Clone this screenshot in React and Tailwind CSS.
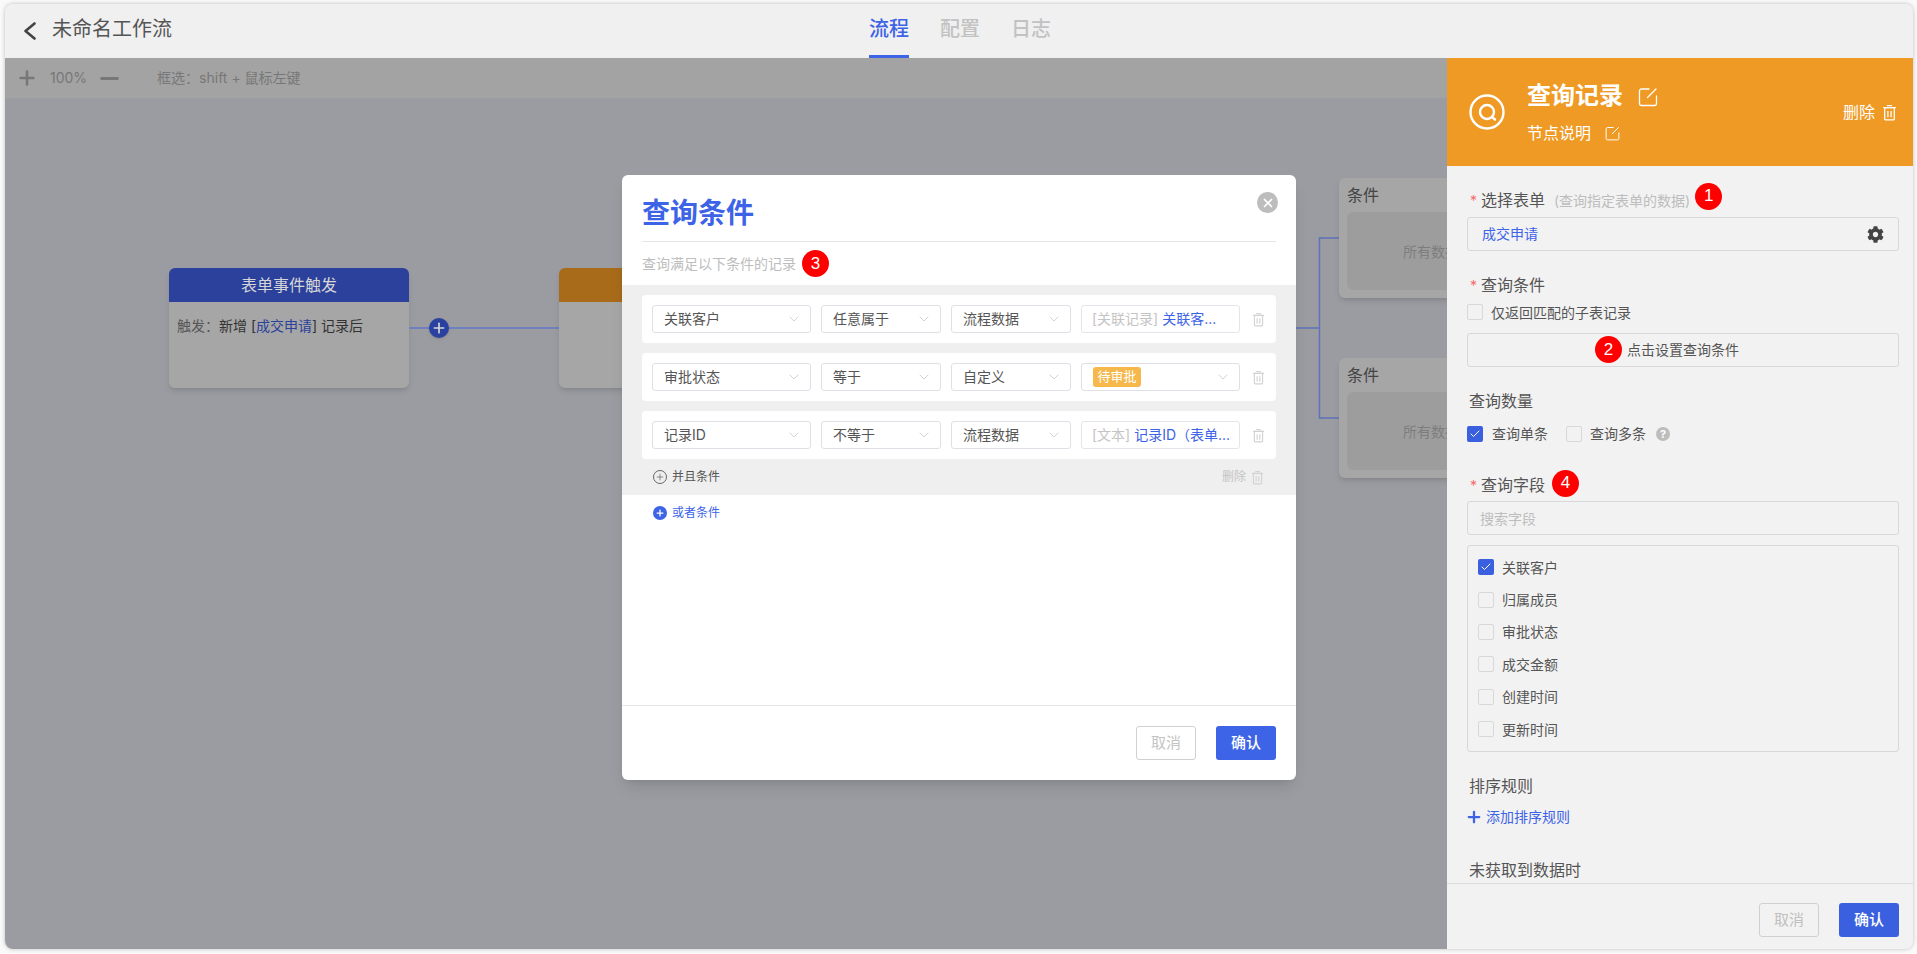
import React from 'react';
import { ChevronDown, Plus, Minus, Check, X } from 'lucide-react';
import { FaCog } from 'react-icons/fa';

const fieldOptions = ['关联客户', '归属成员', '审批状态', '成交金额', '创建时间', '更新时间'];

const conditionRows = [
  { field: '关联客户', op: '任意属于', source: '流程数据', value: <><span className="text-[#c4c4c4]">[关联记录] </span><span className="text-[#3d63e6]">关联客...</span></> },
  { field: '审批状态', op: '等于', source: '自定义', tag: '待审批' },
  { field: '记录ID', op: '不等于', source: '流程数据', value: <><span className="text-[#c4c4c4]">[文本] </span><span className="text-[#3d63e6]">记录ID（表单...</span></> },
];

function EditIcon({ className }) {
  return (
    <svg viewBox="0 0 20 20" fill="none" stroke="currentColor" strokeWidth="1.3" strokeLinecap="round" className={className}>
      <path d="M11 2H3.5A2 2 0 0 0 1.500 4v12.500a2 2 0 0 0 2 2h13a2 2 0 0 0 2-2V9" />
      <path d="M18 2 9.500 10.500" />
    </svg>
  );
}

function TrashIcon({ className }) {
  return (
    <svg viewBox="0 0 12 16" fill="none" stroke="currentColor" strokeWidth="1.2" className={className}>
      <path d="M4 1.500h4M0.500 3.500h11" strokeLinecap="round" />
      <rect x="1.500" y="3.500" width="9" height="11.500" rx="1" />
      <path d="M4.500 6.500v6M7.500 6.500v6" />
    </svg>
  );
}

function Badge({ n, className = '' }) {
  return (
    <span className={`flex h-[27px] w-[27px] shrink-0 items-center justify-center rounded-full bg-[#fe0000] font-['Liberation_Sans',sans-serif] text-[17px] text-white ${className}`}>
      {n}
    </span>
  );
}

function CheckBox({ checked }) {
  return checked ? (
    <span className="flex h-4 w-4 shrink-0 items-center justify-center rounded-[2px] bg-[#3b60df]">
      <Check className="h-3 w-3 text-white" strokeWidth={2} />
    </span>
  ) : (
    <span className="h-4 w-4 shrink-0 rounded-[2px] border border-[#d8d8d8]" />
  );
}

function Select({ className, children }) {
  return (
    <div className={`flex h-7 shrink-0 items-center justify-between rounded-[3px] border border-[#dfdfe6] pl-[11px] pr-2 text-[14px] text-[#555] ${className}`}>
      <span className="truncate pb-0.5">{children}</span>
      <ChevronDown className="h-4 w-4 shrink-0 text-[#bdbdbd]" strokeWidth={1} />
    </div>
  );
}

function FieldLabel({ required, children }) {
  return (
    <div className="flex h-6 items-center text-[16px] text-[#555]">
      {required && <span className="w-[14px] pl-[3px] text-[14px] text-[#f56c6c]">*</span>}
      {children}
    </div>
  );
}

function ConditionNode({ className }) {
  return (
    <div className={`absolute left-[1334px] h-[120px] w-[240px] rounded-md bg-[#a6a6a6] px-2 shadow-md ${className}`}>
      <div className="flex h-[34px] items-center text-[16px] text-[#444]">条件</div>
      <div className="flex h-[78px] items-center justify-center rounded-md bg-[#9d9d9d] text-[14px] text-[#7d7d7d]">所有数据都可进入</div>
    </div>
  );
}

function Canvas() {
  return (
    <div className="relative flex-1 overflow-hidden bg-[#9b9ca1]">
      <div className="absolute left-[164px] top-[170px] h-[120px] w-[240px] overflow-hidden rounded-md bg-[#a6a6a6] shadow-md">
        <div className="flex h-[34px] items-center justify-center bg-[#2b419b] text-[16px] text-[#d6d6d6]">表单事件触发</div>
        <div className="px-2 pt-[14px] text-[14px] leading-5 text-[#333]">
          <span className="text-[#555]">触发：</span>新增 [<span className="text-[#2c419b]">成交申请</span>] 记录后
        </div>
      </div>
      <div className="absolute left-[404px] top-[229px] h-0.5 w-[150px] bg-[#6f7fbf]" />
      <div className="absolute left-[424px] top-[220px] flex h-5 w-5 items-center justify-center rounded-full bg-[#2b41a0] shadow">
        <Plus className="h-4 w-4 text-[#d6d6d6]" strokeWidth={2.5} />
      </div>
      <div className="absolute left-[554px] top-[170px] h-[120px] w-[240px] overflow-hidden rounded-md bg-[#a6a6a6] shadow-md">
        <div className="h-[34px] bg-[#a86b1a]" />
      </div>
      <svg className="absolute left-[1280px] top-[130px] h-[200px] w-[60px]" fill="none" stroke="#5d72b8" strokeWidth="1.500">
        <path d="M0 100H34.500M54 10H34.500V190H54" />
      </svg>
      <ConditionNode className="top-[80px]" />
      <ConditionNode className="top-[260px]" />
    </div>
  );
}

function ConditionCard({ row }) {
  return (
    <div className="flex h-12 items-center gap-[10px] rounded bg-white pl-[10px]">
      <Select className="w-[159px]">{row.field}</Select>
      <Select className="w-[120px]">{row.op}</Select>
      <Select className="w-[120px]">{row.source}</Select>
      {row.tag ? (
        <Select className="w-[159px]">
          <span className="mt-0.5 flex h-5 w-12 items-center justify-center rounded-[3px] bg-[#f6b84a] text-[13px] text-white">{row.tag}</span>
        </Select>
      ) : (
        <div className="flex h-7 w-[159px] items-center rounded-[3px] border border-[#e4e4ea] pl-[10px] text-[14px]">
          <span className="truncate pb-0.5">{row.value}</span>
        </div>
      )}
      <TrashIcon className="ml-[3px] h-[15px] w-[11px] text-[#d2d2d2]" />
    </div>
  );
}

function QueryModal() {
  return (
    <div className="absolute left-[617px] top-[171px] flex h-[605px] w-[674px] flex-col overflow-hidden rounded-md bg-white shadow-lg">
      <div className="relative mx-5 flex h-[67px] items-end border-b border-[#e6e6e6] pb-[8px]">
        <span className="text-[28px] font-bold leading-[40px] text-[#3d63e6]">查询条件</span>
        <span className="absolute right-[-2px] top-[17px] flex h-[21px] w-[21px] items-center justify-center rounded-full bg-[#bdbdbd]">
          <X className="h-[14px] w-[14px] text-white" strokeWidth={3} />
        </span>
      </div>
      <div className="mx-5 flex h-[43px] items-center gap-[6px] text-[14px] text-[#bdbdbd]">
        查询满足以下条件的记录
        <Badge n={3} />
      </div>
      <div className="flex h-[210px] flex-col bg-[#efefef] px-5 pt-[10px]">
        <div className="flex flex-col gap-[10px]">
          {conditionRows.map(row => <ConditionCard key={row.field} row={row} />)}
        </div>
        <div className="flex flex-1 items-center justify-between pl-[11px] pr-[13px] text-[12px]">
          <span className="flex items-center gap-[5px] text-[#555]">
            <span className="flex h-[14px] w-[14px] items-center justify-center rounded-full border border-[#666]">
              <Plus className="h-[10px] w-[10px]" strokeWidth={1.5} />
            </span>
            并且条件
          </span>
          <span className="flex items-center gap-[6px] text-[#c4c4c4]">
            删除
            <TrashIcon className="h-[15px] w-[11px] text-[#d2d2d2]" />
          </span>
        </div>
      </div>
      <div className="flex flex-1 items-start px-5 pl-[31px] pt-[10px]">
        <span className="flex items-center gap-[5px] text-[12px] leading-[16px] text-[#3d63e6]">
          <span className="flex h-[14px] w-[14px] items-center justify-center rounded-full bg-[#3d63e6]">
            <Plus className="h-[10px] w-[10px] text-white" strokeWidth={3} />
          </span>
          或者条件
        </span>
      </div>
      <div className="flex h-[75px] items-start justify-end gap-5 border-t border-[#e6e6e6] px-5 pt-[20px]">
        <button className="h-[34px] w-[60px] rounded-[3px] border border-[#d0d0d0] text-[15px] text-[#c4c4c4]">取消</button>
        <button className="h-[34px] w-[60px] rounded-[3px] bg-[#3d63e6] text-[15px] font-medium text-white">确认</button>
      </div>
    </div>
  );
}

function SidePanel() {
  return (
    <aside className="flex w-[466px] shrink-0 flex-col bg-[#f2f2f2]">
      <div className="flex h-[108px] shrink-0 items-center bg-[#ef9a24] pl-[22px] pr-[17px] text-white">
        <svg viewBox="0 0 36 36" fill="none" stroke="currentColor" className="h-9 w-9 shrink-0">
          <circle cx="18" cy="18" r="16.500" strokeWidth="2.400" />
          <circle cx="18" cy="18" r="7" strokeWidth="2.400" />
          <path d="M23 23l3 2.500" strokeWidth="2.400" strokeLinecap="round" />
        </svg>
        <div className="ml-[22px] flex flex-col">
          <div className="flex items-center gap-[15px]">
            <span className="pb-0.5 text-[24px] font-bold leading-[34px]">查询记录</span>
            <EditIcon className="h-5 w-5" />
          </div>
          <div className="mt-[6px] flex items-center gap-[14px]">
            <span className="text-[16px] leading-6">节点说明</span>
            <EditIcon className="h-[15px] w-[15px]" />
          </div>
        </div>
        <div className="ml-auto flex items-center gap-2 text-[16px]">
          删除
          <TrashIcon className="h-[17px] w-[13px]" />
        </div>
      </div>

      <div className="flex-1 overflow-hidden pl-5 pr-[14px] pt-[22px]">
        <div className="flex h-6 items-center">
          <FieldLabel required>选择表单</FieldLabel>
          <span className="ml-[9px] text-[14px] text-[#bdbdbd]">(查询指定表单的数据)</span>
          <Badge n={1} className="ml-[5px] -translate-y-1" />
        </div>
        <div className="mt-[5px] flex h-[34px] items-center justify-between rounded-[3px] border border-[#d8d8d8] pl-[14px] pr-[14px] text-[14px] text-[#3d63e6]">
          <span className="pb-0.5">成交申请</span>
          <FaCog className="h-[17px] w-[17px] text-[#444]" />
        </div>

        <div className="mt-[22px]">
          <FieldLabel required>查询条件</FieldLabel>
        </div>
        <div className="mt-[6px] flex h-[18px] items-center gap-2 text-[14px] text-[#555]">
          <CheckBox />
          仅返回匹配的子表记录
        </div>
        <div className="relative mt-3 flex h-[34px] items-center justify-center rounded-[3px] border border-[#d8d8d8] text-[14px] text-[#555]">
          <span className="pb-0.5">点击设置查询条件</span>
          <Badge n={2} className="absolute left-[127px] top-[2px]" />
        </div>

        <div className="mt-[22px] pl-0.5">
          <FieldLabel>查询数量</FieldLabel>
        </div>
        <div className="mt-[11px] flex h-5 items-center text-[14px] text-[#555]">
          <CheckBox checked />
          <span className="ml-[9px] pb-0.5">查询单条</span>
          <span className="ml-[18px] flex"><CheckBox /></span>
          <span className="ml-2 pb-0.5">查询多条</span>
          <span className="ml-[10px] flex h-[14px] w-[14px] items-center justify-center rounded-full bg-[#bdbdbd] text-[11px] font-bold text-white">?</span>
        </div>

        <div className="mt-[29px] flex h-6 items-center">
          <FieldLabel required>查询字段</FieldLabel>
          <Badge n={4} className="ml-[7px] -translate-y-0.5" />
        </div>
        <div className="mt-1 flex h-[34px] items-center rounded-[3px] border border-[#d8d8d8] pl-3 text-[14px] text-[#bdbdbd]">搜索字段</div>
        <div className="mt-[10px] h-[207px] rounded-[3px] border border-[#d8d8d8] pl-[10px] pt-[5px]">
          {fieldOptions.map((name, i) => (
            <div key={name} className="flex h-[32.4px] items-center gap-2 text-[14px] text-[#555]">
              <CheckBox checked={i === 0} />
              {name}
            </div>
          ))}
        </div>

        <div className="mt-[22px] pl-0.5">
          <FieldLabel>排序规则</FieldLabel>
        </div>
        <div className="mt-[9px] flex h-5 items-center gap-[3px] text-[14px] text-[#3d63e6]">
          <Plus className="-ml-0.5 h-[18px] w-[18px]" strokeWidth={3} />
          <span className="pb-0.5">添加排序规则</span>
        </div>
        <div className="mt-[31px] pl-0.5">
          <FieldLabel>未获取到数据时</FieldLabel>
        </div>
      </div>

      <div className="flex h-[66px] shrink-0 items-start justify-end gap-5 border-t border-[#dcdcdc] pr-[14px] pt-[19px]">
        <button className="h-[34px] w-[60px] rounded-[3px] border border-[#d0d0d0] text-[15px] text-[#c0c0c0]">取消</button>
        <button className="h-[34px] w-[60px] rounded-[3px] bg-[#3b60df] text-[15px] font-medium text-white">确认</button>
      </div>
    </aside>
  );
}

export default function App() {
  return (
    <div className="h-[954px] w-[1917px] overflow-hidden bg-[#fafafa] pl-[5px] pt-1 font-['Inter','Noto_Sans_CJK_SC',sans-serif]">
      <div className="relative flex h-[945px] w-[1908px] flex-col overflow-hidden rounded-lg bg-[#f0f0f0] shadow-[0_0_4px_rgba(0,0,0,0.25)]">
        <header className="flex h-[54px] shrink-0 items-center bg-[#f0f0f0] pl-[18px]">
          <svg viewBox="0 0 13 18" fill="none" stroke="#444" strokeWidth="2.600" strokeLinecap="round" strokeLinejoin="round" className="h-[18px] w-[13px]">
            <path d="M11.500 1.500 2.500 9l9 7.500" />
          </svg>
          <span className="ml-4 pb-1 text-[20px] text-[#555]">未命名工作流</span>
          <nav className="ml-[697px] flex h-full gap-[31px] text-[20px] font-medium text-[#c2c2c2]">
            <span className="flex items-center border-b-[3px] border-[#3d63e6] pb-0.5 text-[#3d63e6]">流程</span>
            <span className="flex items-center pb-[5px]">配置</span>
            <span className="flex items-center pb-[5px]">日志</span>
          </nav>
        </header>
        <div className="flex min-h-0 flex-1">
          <div className="flex min-w-0 flex-1 flex-col">
            <div className="flex h-10 shrink-0 items-center bg-[#a3a3a3] pl-[11px] text-[14px] text-[#777]">
              <Plus className="h-[22px] w-[22px]" strokeWidth={2.800} />
              <span className="ml-3 pb-0.5">100%</span>
              <Minus className="ml-[9px] h-[27px] w-[27px]" strokeWidth={2.500} />
              <span className="ml-[34px] pb-0.5">框选：shift + 鼠标左键</span>
            </div>
            <Canvas />
          </div>
          <SidePanel />
        </div>
        <QueryModal />
      </div>
    </div>
  );
}
